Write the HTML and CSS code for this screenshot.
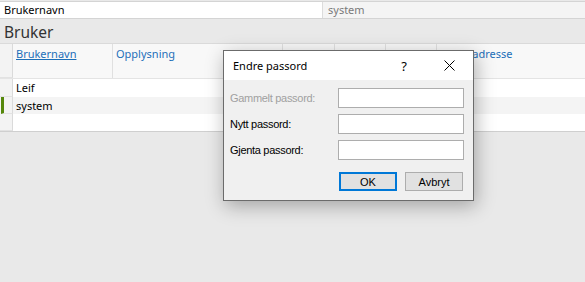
FILE: index.html
```html
<!DOCTYPE html>
<html lang="no">
<head>
    <meta charset="UTF-8">
    <title>Bruker</title>
    <link rel="stylesheet" href="styles.css">
</head>
<body>
    <div class="topbar">
        <div class="field-name">Brukernavn</div>
        <div class="field-value">system</div>
    </div>
    <div class="page-title">Bruker</div>

    <div class="grid">
        <div class="grid-row header">
            <div class="indicator"></div>
            <div class="cell"><a>Brukernavn</a></div>
            <div class="cell"><a class="plain">Opplysning</a></div>
            <div class="cell"><a class="plain">System</a></div>
            <div class="cell"><a class="plain">Modul</a></div>
            <div class="cell"><a class="plain">Rader</a></div>
            <div class="cell"><a class="plain">E-postadresse</a></div>
        </div>
        <div class="grid-row">
            <div class="indicator"></div>
            <div class="cell wide">Leif</div>
        </div>
        <div class="grid-row alt">
            <div class="indicator current"></div>
            <div class="cell wide">system</div>
        </div>
        <div class="grid-row empty">
            <div class="indicator"></div>
            <div class="cell wide"></div>
        </div>
    </div>

    <div class="dialog">
        <div class="dialog-title">
            <span class="title-text">Endre passord</span>
            <span class="help">?</span>
            <svg class="close" width="11" height="11" viewBox="0 0 11 11">
                <path d="M0.5 0.5 L10.5 10.5 M10.5 0.5 L0.5 10.5" stroke="#000" stroke-width="1" fill="none"/>
            </svg>
        </div>
        <div class="dialog-body">
            <div class="form-row disabled">
                <label>Gammelt passord:</label>
                <input type="password" disabled>
            </div>
            <div class="form-row">
                <label>Nytt passord:</label>
                <input type="password">
            </div>
            <div class="form-row">
                <label>Gjenta passord:</label>
                <input type="password">
            </div>
            <div class="buttons">
                <button class="default">OK</button>
                <button>Avbryt</button>
            </div>
        </div>
    </div>
</body>
</html>
```

FILE: styles.css
```css
body {
    margin: 0;
    padding: 1px 0 0;
    background: #e9e9e9;
    font-family: 'Noto Sans', sans-serif;
    font-size: 11px;
    color: #000;
    width: 585px;
    height: 281px;
    overflow: hidden;
}

.topbar {
    display: flex;
    height: 16px;
    line-height: 16px;
    border-top: 1px solid #d4d4d4;
    border-bottom: 1px solid #d4d4d4;
}

.field-name {
    width: 318px;
    padding-left: 4px;
    background: #fff;
    border-right: 1px solid #dcdcdc;
}

.field-value {
    flex: 1;
    padding-left: 5px;
    background: #f4f4f4;
    color: #7a7a7a;
}

.page-title {
    height: 24px;
    padding-left: 4px;
    font-size: 15.5px;
    line-height: 27px;
    color: #333;
}

.grid {
    background: #fff;
    border-top: 1px solid #dadada;
    border-bottom: 1px solid #cfcfcf;
}

.grid-row {
    display: grid;
    grid-template-columns: 13px 100px 170px 52px 51px 51px 1fr;
    height: 18px;
    line-height: 18px;
}

.grid-row.header {
    height: 34px;
    background: #f8f8f8;
    border-bottom: 1px solid #e4e4e4;
}

.grid-row.alt {
    background: #f4f4f4;
    height: 17px;
}

.grid-row.empty {
    height: 17px;
}

.indicator {
    background: #f3f3f3;
    border-right: 1px solid #dadada;
    border-bottom: 1px solid #e2e2e2;
    box-sizing: border-box;
}

.indicator.current {
    border-left: 3px solid #55870b;
    margin-left: 1px;
}

.cell {
    padding: 0 3px;
    white-space: nowrap;
    overflow: hidden;
}

.cell.wide {
    grid-column: 2 / -1;
}

.header .cell {
    border-right: 1px solid #e0e0e0;
    line-height: 20px;
}

.header .cell:last-child {
    border-right: none;
}

.header a {
    color: #1d6fb8;
    text-decoration: underline;
}

.header a.plain {
    text-decoration: none;
}

.dialog {
    position: absolute;
    left: 223px;
    top: 50px;
    width: 249px;
    border: 1px solid #6b6b6b;
    background: #f0f0f0;
    box-shadow: 2px 5px 18px rgba(0, 0, 0, 0.3);
}

.dialog-title {
    display: flex;
    align-items: center;
    height: 29px;
    background: #fff;
    padding-left: 9px;
    font-size: 11px;
}

.title-text {
    flex: 1;
}

.help {
    font-size: 13px;
    margin-right: 37px;
}

.close {
    margin-right: 18px;
}

.dialog-body {
    display: flex;
    flex-direction: column;
    gap: 6px;
    padding: 8px 9px 9px 6px;
    font-family: 'Liberation Sans', sans-serif;
    font-size: 11px;
    letter-spacing: -0.3px;
}

.form-row {
    display: flex;
    align-items: center;
    justify-content: space-between;
}

.form-row.disabled label {
    color: #a0a0a0;
}

input {
    width: 126px;
    height: 20px;
    box-sizing: border-box;
    margin: 0;
    border: 1px solid #adadad;
    background: #fff;
}

.buttons {
    display: flex;
    justify-content: flex-end;
    gap: 8px;
    margin-top: 6px;
    padding-right: 1px;
}

button {
    width: 58px;
    height: 19px;
    box-sizing: border-box;
    margin: 0;
    padding: 0;
    border: 1px solid #adadad;
    background: #e1e1e1;
    font-family: 'Liberation Sans', sans-serif;
    font-size: 11px;
    color: #000;
}

button.default {
    border: 2px solid #0078d7;
}
```
